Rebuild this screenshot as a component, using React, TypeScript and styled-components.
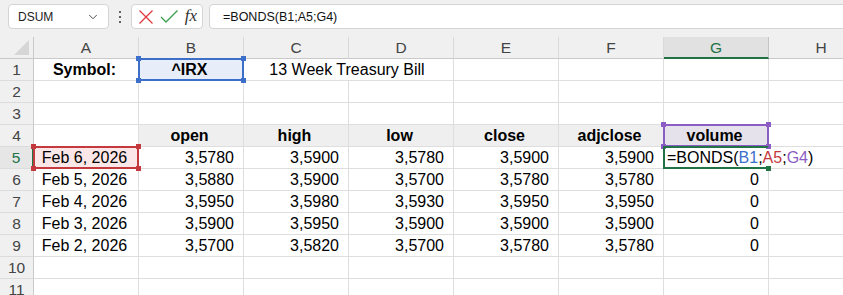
import React from "react";
import styled, { createGlobalStyle, css } from "styled-components";
import { ChevronDown } from "lucide-react";

const Global = createGlobalStyle`
  html, body { margin: 0; padding: 0; background: #f0f0f0; }
  body { font-family: "Liberation Sans", Arial, sans-serif; }
`;

const Page = styled.div`
  width: 843px;
  height: 295px;
  overflow: hidden;
  background: #f0f0f0;
  display: flex;
  flex-direction: column;
`;

const Toolbar = styled.div`
  flex-shrink: 0;
  height: 37px;
  box-sizing: border-box;
  padding: 4px 0 0 8px;
  display: flex;
  align-items: flex-start;
`;

const Box = styled.div`
  height: 25px;
  box-sizing: border-box;
  background: #fff;
  border: 1px solid #d4d4d4;
  border-radius: 4px;
  display: flex;
  align-items: center;
`;

const NameBox = styled(Box)`
  width: 101px;
  padding: 0 8px 0 9px;
  justify-content: space-between;
  font-size: 12px;
  color: #222;
`;

const Dots = styled.div`
  width: 22px;
  height: 25px;
  display: flex;
  flex-direction: column;
  align-items: center;
  justify-content: center;
  gap: 3px;
  span {
    width: 2px;
    height: 2px;
    border-radius: 1px;
    background: #333;
  }
`;

const IconBox = styled(Box)`
  width: 72px;
  padding: 0 3px 0 6px;
  justify-content: space-between;
  margin-right: 6px;
`;

const Fx = styled.span`
  font-family: "Liberation Serif", "Times New Roman", serif;
  font-style: italic;
  font-size: 17px;
  line-height: 17px;
  color: #333;
  padding: 0 2px 2px 0;
`;

const FormulaBox = styled(Box)`
  flex: 1;
  margin-right: -12px;
  padding-left: 13px;
  font-size: 12.5px;
  color: #111;
`;

const Grid = styled.div`
  flex-shrink: 0;
  display: grid;
  grid-template-columns: 34px repeat(8, 105px);
  grid-auto-rows: 22px;
  background: #fff;
  width: 874px;
`;

const HeadCell = styled.div<{ $active?: boolean }>`
  box-sizing: border-box;
  background: #f0f0f0;
  border-right: 1px solid #d9d9d9;
  border-bottom: 1px solid #c9c9c9;
  font-size: 15.5px;
  line-height: 21px;
  color: #444;
  text-align: center;
  ${(p) =>
    p.$active &&
    css`
      background: #e1e1e1;
      color: #217346;
      border-bottom: 2px solid #217346;
      border-right-color: #c4c4c4;
    `}
`;

const Corner = styled(HeadCell)`
  position: relative;
  border-right-color: #c9c9c9;
  svg {
    position: absolute;
    left: 14px;
    top: 3px;
  }
`;

const RowHead = styled.div<{ $active?: boolean }>`
  box-sizing: border-box;
  background: #f0f0f0;
  border-right: 1px solid #c9c9c9;
  border-bottom: 1px solid #dcdcdc;
  font-size: 15.5px;
  line-height: 21px;
  color: #444;
  text-align: center;
  ${(p) =>
    p.$active &&
    css`
      background: #e6e6e6;
      color: #217346;
      border-right: 2px solid #217346;
    `}
`;

type Align = "left" | "center" | "right";

const Cell = styled.div<{
  $align?: Align;
  $bold?: boolean;
  $fill?: string;
  $span?: number;
  $marked?: boolean;
  $noRight?: boolean;
}>`
  box-sizing: border-box;
  border-right: 1px solid ${(p) => (p.$noRight ? "transparent" : "#dedede")};
  border-bottom: 1px solid #dedede;
  font-size: 16px;
  line-height: 21px;
  color: #000;
  white-space: nowrap;
  padding: ${(p) => (p.$align === "left" ? "0 0 0 3px" : "0 9px 0 6px")};
  text-align: ${(p) => p.$align ?? "right"};
  font-weight: ${(p) => (p.$bold ? 700 : 400)};
  background: ${(p) => p.$fill ?? "transparent"};
  ${(p) => p.$span && css`grid-column: span ${p.$span};`}
  ${(p) => p.$marked && css`position: relative;`}
`;

const Mark = styled.div<{ $color: string; $open?: boolean }>`
  position: absolute;
  left: -1px;
  top: -1px;
  right: -1px;
  bottom: -1px;
  border: 2px solid ${(p) => p.$color};
  ${(p) => p.$open && css`border-right-color: transparent;`}
  z-index: 3;
  pointer-events: none;
`;

const Handle = styled.span<{ $color: string; $pos: "tl" | "tr" | "bl" | "br" }>`
  position: absolute;
  width: 5px;
  height: 5px;
  background: ${(p) => p.$color};
  ${(p) => (p.$pos[0] === "t" ? "top: -4px;" : "bottom: -4px;")}
  ${(p) => (p.$pos[1] === "l" ? "left: -4px;" : "right: -4px;")}
`;

const Ref = styled.span<{ $color: string }>`
  color: ${(p) => p.$color};
`;

const BLUE = "#3b6fca";
const RED = "#c3393d";
const PURPLE = "#8b5cc3";
const GREEN = "#217346";

type Pos = "tl" | "tr" | "bl" | "br";

const RangeMark = ({ color, corners }: { color: string; corners: Pos[] }) => (
  <Mark $color={color}>
    {corners.map((c) => (
      <Handle key={c} $color={color} $pos={c} />
    ))}
  </Mark>
);

const cols = ["A", "B", "C", "D", "E", "F", "G", "H"];

const data = [
  ["Feb 6, 2026", "3,5780", "3,5900", "3,5780", "3,5900", "3,5900"],
  ["Feb 5, 2026", "3,5880", "3,5900", "3,5700", "3,5780", "3,5780"],
  ["Feb 4, 2026", "3,5950", "3,5980", "3,5930", "3,5950", "3,5950"],
  ["Feb 3, 2026", "3,5900", "3,5950", "3,5900", "3,5900", "3,5900"],
  ["Feb 2, 2026", "3,5700", "3,5820", "3,5700", "3,5780", "3,5780"],
];

const heads = ["open", "high", "low", "close", "adjclose"];

const Empty = ({ n }: { n: number }) => (
  <>
    {Array.from({ length: n }).map((_, i) => (
      <Cell key={i} />
    ))}
  </>
);

export default function App() {
  const all4: Pos[] = ["tl", "tr", "bl", "br"];
  return (
    <Page>
      <Global />
      <Toolbar>
        <NameBox>
          <span>DSUM</span>
          <ChevronDown size={14} strokeWidth={1.6} color="#444" />
        </NameBox>
        <Dots>
          <span />
          <span />
          <span />
        </Dots>
        <IconBox>
          <svg width="16" height="16" viewBox="0 0 16 16">
            <path d="M1.5 1.5 L14.5 14.5 M14.5 1.5 L1.5 14.5" stroke="#e0393e" strokeWidth="1.3" fill="none" />
          </svg>
          <svg width="19" height="16" viewBox="0 0 19 16">
            <path d="M1 8 L6 13 L17.5 1.5" stroke="#3a9f4d" strokeWidth="1.3" fill="none" />
          </svg>
          <Fx>fx</Fx>
        </IconBox>
        <FormulaBox>=BONDS(B1;A5;G4)</FormulaBox>
      </Toolbar>
      <Grid>
        <Corner>
          <svg width="15" height="15" viewBox="0 0 15 15">
            <path d="M15 0 L15 15 L0 15 Z" fill="#d6d6d6" />
          </svg>
        </Corner>
        {cols.map((c) => (
          <HeadCell key={c} $active={c === "G"}>
            {c}
          </HeadCell>
        ))}

        <RowHead>1</RowHead>
        <Cell $align="center" $bold>
          Symbol:
        </Cell>
        <Cell $align="center" $bold $fill="#e8eef9" $marked>
          ^IRX
          <RangeMark color={BLUE} corners={all4} />
        </Cell>
        <Cell $align="center" $span={2}>
          13 Week Treasury Bill
        </Cell>
        <Empty n={4} />

        <RowHead>2</RowHead>
        <Empty n={8} />
        <RowHead>3</RowHead>
        <Empty n={8} />

        <RowHead>4</RowHead>
        <Cell />
        {heads.map((h) => (
          <Cell key={h} $align="center" $bold $fill="#efefef">
            {h}
          </Cell>
        ))}
        <Cell $align="center" $bold $fill="#e6e2ec" $marked>
          volume
          <RangeMark color={PURPLE} corners={all4} />
        </Cell>
        <Cell />

        {data.map((row, i) => (
          <React.Fragment key={i}>
            <RowHead $active={i === 0}>{5 + i}</RowHead>
            {row.map((v, j) =>
              j === 0 ? (
                <Cell key={j} $align="center" $fill={i === 0 ? "#fbe7e7" : undefined} $marked={i === 0}>
                  {v}
                  {i === 0 && <RangeMark color={RED} corners={all4} />}
                </Cell>
              ) : (
                <Cell key={j}>{v}</Cell>
              )
            )}
            {i === 0 ? (
              <Cell $align="left" $marked $noRight>
                =BONDS(<Ref $color={BLUE}>B1</Ref>;<Ref $color={RED}>A5</Ref>;<Ref $color={PURPLE}>G4</Ref>)
                <Mark $color={GREEN} $open>
                  <Handle $color={GREEN} $pos="br" />
                </Mark>
              </Cell>
            ) : (
              <Cell>0</Cell>
            )}
            <Cell />
          </React.Fragment>
        ))}

        <RowHead>10</RowHead>
        <Empty n={8} />
        <RowHead>11</RowHead>
        <Empty n={8} />
      </Grid>
    </Page>
  );
}
